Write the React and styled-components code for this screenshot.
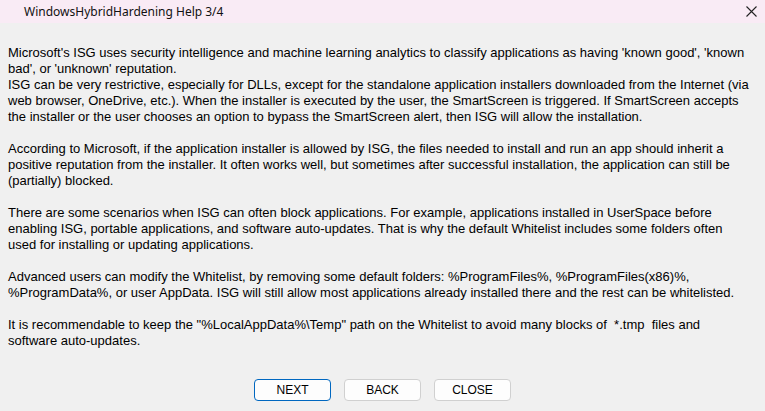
import React from "react";
import styled, { createGlobalStyle } from "styled-components";

const Global = createGlobalStyle`
  html, body { margin: 0; padding: 0; }
  body { width: 765px; height: 411px; overflow: hidden; background: #f0f0f0; }
`;

const Window = styled.div`
  width: 765px;
  height: 411px;
  display: flex;
  flex-direction: column;
  background: #f0f0f0;
  font-family: "Liberation Sans", Arial, sans-serif;
  color: #000;
`;

const TitleBar = styled.div`
  height: 23px;
  flex: none;
  display: flex;
  align-items: center;
  justify-content: space-between;
  background: #f9ebf5;
  padding: 0 6px 0 24px;
`;

const Title = styled.span`
  font-family: "Noto Sans", "Liberation Sans", sans-serif;
  font-size: 12px;
  color: #111;
  margin-top: -1px;
`;

const CloseX = styled.div`
  width: 12px;
  height: 12px;
  display: flex;
  align-items: center;
  justify-content: center;
  margin-right: 2px;
`;

const Body = styled.div`
  flex: 1;
  display: flex;
  flex-direction: column;
  padding: 22px 0 0 8px;
`;

const Text = styled.div`
  font-size: 13px;
  line-height: 16px;
  white-space: nowrap;
`;

const Para = styled.p`
  margin: 0 0 16px 0;
`;

const Buttons = styled.div`
  display: flex;
  justify-content: center;
  gap: 13px;
  margin-top: auto;
  padding: 0 0 10px 0;
  margin-left: -8px;
`;

const Button = styled.button`
  width: 77px;
  height: 22px;
  box-sizing: border-box;
  border: 1px solid ${(p) => (p.$primary ? "#0067c0" : "#d0d0d0")};
  border-radius: 4px;
  background: #fdfdfd;
  font-family: "Liberation Sans", Arial, sans-serif;
  font-size: 12px;
  color: #000;
  padding: 0;
  display: flex;
  align-items: center;
  justify-content: center;
`;

export default function App() {
  return (
    <Window>
      <Global />
      <TitleBar>
        <Title>WindowsHybridHardening Help 3/4</Title>
        <CloseX>
          <svg width="11" height="11" viewBox="0 0 11 11">
            <path d="M0.5 0.5 L10.5 10.5 M10.5 0.5 L0.5 10.5" stroke="#222" strokeWidth="1.1" />
          </svg>
        </CloseX>
      </TitleBar>
      <Body>
        <Text>
          <Para>
            Microsoft's ISG uses security intelligence and machine learning analytics to classify applications as having 'known good', 'known
            <br />
            bad', or 'unknown' reputation.
            <br />
            ISG can be very restrictive, especially for DLLs, except for the standalone application installers downloaded from the Internet (via
            <br />
            web browser, OneDrive, etc.). When the installer is executed by the user, the SmartScreen is triggered. If SmartScreen accepts
            <br />
            the installer or the user chooses an option to bypass the SmartScreen alert, then ISG will allow the installation.
          </Para>
          <Para>
            According to Microsoft, if the application installer is allowed by ISG, the files needed to install and run an app should inherit a
            <br />
            positive reputation from the installer. It often works well, but sometimes after successful installation, the application can still be
            <br />
            (partially) blocked.
          </Para>
          <Para>
            There are some scenarios when ISG can often block applications. For example, applications installed in UserSpace before
            <br />
            enabling ISG, portable applications, and software auto-updates. That is why the default Whitelist includes some folders often
            <br />
            used for installing or updating applications.
          </Para>
          <Para>
            Advanced users can modify the Whitelist, by removing some default folders: %ProgramFiles%, %ProgramFiles(x86)%,
            <br />
            %ProgramData%, or user AppData. ISG will still allow most applications already installed there and the rest can be whitelisted.
          </Para>
          <Para>
            It is recommendable to keep the "%LocalAppData%\Temp" path on the Whitelist to avoid many blocks of &nbsp;*.tmp &nbsp;files and
            <br />
            software auto-updates.
          </Para>
        </Text>
        <Buttons>
          <Button $primary>NEXT</Button>
          <Button>BACK</Button>
          <Button>CLOSE</Button>
        </Buttons>
      </Body>
    </Window>
  );
}
